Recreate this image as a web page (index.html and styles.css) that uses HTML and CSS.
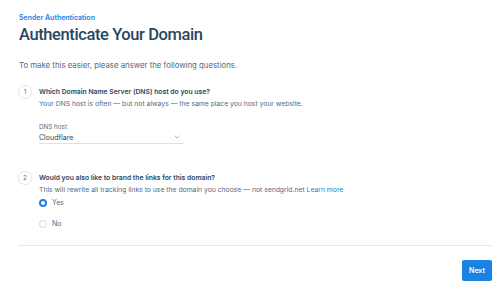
FILE: index.html
```html
<!DOCTYPE html>
<html lang="en">
<head>
  <meta charset="UTF-8" />
  <title>Authenticate Your Domain</title>
  <link rel="stylesheet" href="styles.css">
</head>
<body>
  <div class="page">
    <div class="breadcrumb">Sender Authentication</div>
    <h1>Authenticate Your Domain</h1>
    <p class="intro">To make this easier, please answer the following questions.</p>

    <div class="step">
      <div class="step-num">1</div>
      <div class="step-body">
        <div class="step-title">Which Domain Name Server (DNS) host do you use?</div>
        <div class="step-desc">Your DNS host is often — but not always — the same place you host your website.</div>
        <div class="field">
          <label class="field-label">DNS host</label>
          <div class="select">
            <span>Cloudflare</span>
            <svg class="chevron" width="6" height="4" viewBox="0 0 6 4"><path d="M0.5 0.5 L3 3 L5.5 0.5" fill="none" stroke="#9aa4b0" stroke-width="0.8"/></svg>
          </div>
        </div>
      </div>
    </div>

    <div class="step step-two">
      <div class="step-num">2</div>
      <div class="step-body">
        <div class="step-title">Would you also like to brand the links for this domain?</div>
        <div class="step-desc">This will rewrite all tracking links to use the domain you choose — not sendgrid.net <a href="#">Learn more</a></div>
        <div class="radio checked"><span class="dot"></span>Yes</div>
        <div class="radio"><span class="dot"></span>No</div>
      </div>
    </div>

    <hr class="divider">

    <div class="actions">
      <button class="next-btn">Next</button>
    </div>
  </div>
</body>
</html>
```

FILE: styles.css
```css
body {
  margin: 0;
  font-family: Inter, 'Noto Sans', sans-serif;
  background: #fff;
  color: #546b81;
}

.page {
  padding: 13px 8px 0 19px;
}

.breadcrumb {
  font-size: 7px;
  font-weight: 600;
  color: #1a82e2;
  line-height: 9px;
}

h1 {
  margin: 0;
  font-family: Roboto, sans-serif;
  font-size: 16.5px;
  font-weight: 500;
  letter-spacing: -0.4px;
  color: #294661;
  line-height: 26px;
}

.intro {
  margin: 12px 0 0;
  font-size: 7.8px;
  line-height: 10px;
  color: #546b81;
}

.step {
  display: flex;
  gap: 7px;
  margin-top: 15px;
}

.step-two {
  margin-top: 27.5px;
}

.step-num {
  flex: none;
  width: 12px;
  height: 12px;
  margin-left: -1px;
  border: 1px solid #e1e6eb;
  border-radius: 50%;
  font-size: 6.5px;
  color: #546b81;
  display: flex;
  align-items: center;
  justify-content: center;
}

.step-body {
  flex: 1;
  padding-top: 1.5px;
}

.step-title {
  font-size: 6.8px;
  font-weight: 600;
  color: #294661;
  line-height: 10px;
}

.step-desc {
  margin-top: 2.5px;
  font-size: 6.8px;
  line-height: 10px;
  color: #546b81;
}

.step-desc a {
  color: #1a82e2;
  text-decoration: none;
}

.field {
  margin-top: 13.5px;
  width: 145px;
}

.field-label {
  display: block;
  font-size: 6.3px;
  line-height: 9px;
  color: #546b81;
}

.select {
  display: flex;
  justify-content: space-between;
  align-items: center;
  font-size: 7px;
  line-height: 11px;
  color: #294661;
  border-bottom: 1px solid #dbe2e8;
  padding-right: 4px;
}

.radio {
  display: flex;
  align-items: center;
  gap: 5px;
  font-size: 7px;
  color: #546b81;
  height: 11px;
  margin-top: 2px;
}

.radio + .radio {
  margin-top: 10px;
}

.dot {
  width: 8px;
  height: 8px;
  box-sizing: border-box;
  border: 1px solid #d4dadf;
  border-radius: 50%;
}

.radio.checked .dot {
  border: 2.5px solid #1a82e2;
}

.divider {
  margin: 15.5px 0 0 -1px;
  border: none;
  border-top: 1px solid #e3e8ec;
}

.actions {
  display: flex;
  justify-content: flex-end;
  margin-top: 14px;
}

.next-btn {
  width: 30px;
  height: 21px;
  border: none;
  border-radius: 2px;
  background: #1a82e2;
  color: #fff;
  font-family: inherit;
  font-size: 7px;
  font-weight: 600;
  padding: 0;
}
```
